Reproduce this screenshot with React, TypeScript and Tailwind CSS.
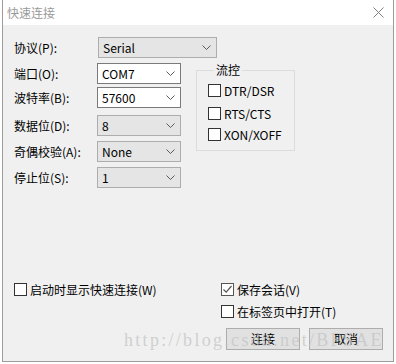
import React from "react";

const font = { fontFamily: '"Noto Sans CJK SC", "Noto Sans", sans-serif' };

function Chevron() {
  return (
    <svg width="9" height="5" viewBox="0 0 9 5" fill="none" aria-hidden>
      <path d="M0.5 0.5 L4.5 4.5 L8.5 0.5" stroke="#5a5a5a" strokeWidth="1" />
    </svg>
  );
}

function Select({ value, width, editable }: { value: string; width: string; editable?: boolean }) {
  return (
    <div
      className={`${width} h-[21px] flex items-center justify-between pl-[4px] pr-[5px] border ${
        editable ? "bg-white border-[#7a7a7a]" : "bg-[#e5e5e5] border-[#adadad]"
      }`}
    >
      <span className="text-[12px] leading-[14px] text-black">{value}</span>
      <Chevron />
    </div>
  );
}

function Check({ label, checked }: { label: string; checked?: boolean }) {
  return (
    <div className="flex items-center h-[13px]">
      <div
        className={`w-[13px] h-[13px] bg-white border flex items-center justify-center ${
          checked ? "border-[#555]" : "border-[#333]"
        }`}
      >
        {checked ? (
          <svg width="11" height="11" viewBox="0 0 11 11" fill="none" aria-hidden>
            <path d="M1.5 5.5 L4.2 8.2 L9.5 2" stroke="#555" strokeWidth="1.2" />
          </svg>
        ) : null}
      </div>
      <span className="ml-[3px] text-[12px] leading-[14px] text-black whitespace-nowrap">{label}</span>
    </div>
  );
}

function Row({ label, children, labelWidth = "w-[83px]", className = "" }: { label: string; children: React.ReactNode; labelWidth?: string; className?: string }) {
  return (
    <div className={`flex items-center ${className}`}>
      <span className={`${labelWidth} text-[12px] leading-[14px] text-black whitespace-nowrap`}>{label}</span>
      {children}
    </div>
  );
}

export default function App() {
  return (
    <div className="w-[396px] h-[364px] bg-white relative overflow-hidden" style={font}>
      <div className="ml-[2px] w-[392px] h-[362px] border-x border-b border-[#9c9c9c] flex flex-col">
        <div className="h-[25px] bg-white flex items-center justify-between pl-[4px] pr-[9px]">
          <span className="text-[12px] leading-[14px] text-[#9a9a9a]">快速连接</span>
          <svg width="11" height="11" viewBox="0 0 11 11" fill="none" aria-hidden>
            <path d="M0.5 0.5 L10.5 10.5 M10.5 0.5 L0.5 10.5" stroke="#808080" strokeWidth="1" />
          </svg>
        </div>

        <div className="flex-1 bg-[#f0f0f0] pl-[11px] pt-[12px]">
          <Row label="协议(P):" labelWidth="w-[84px]">
            <Select value="Serial" width="w-[119px]" />
          </Row>

          <div className="flex items-start">
            <div className="mt-[5px]">
              <Row label="端口(O):">
                <Select value="COM7" width="w-[84px]" editable />
              </Row>
              <Row label="波特率(B):" className="mt-[3px]">
                <Select value="57600" width="w-[84px]" editable />
              </Row>
              <Row label="数据位(D):" className="mt-[7px]">
                <Select value="8" width="w-[84px]" />
              </Row>
              <Row label="奇偶校验(A):" className="mt-[5px]">
                <Select value="None" width="w-[84px]" />
              </Row>
              <Row label="停止位(S):" className="mt-[5px]">
                <Select value="1" width="w-[84px]" />
              </Row>
            </div>

            <fieldset className="ml-[15px] mt-[5px] w-[99px] h-[88px] border border-[#dcdcdc] pl-[11px] pt-[7px]">
              <legend className="ml-[6px] px-[2px] text-[12px] leading-[14px] text-black">流控</legend>
              <Check label="DTR/DSR" />
              <div className="mt-[10px]">
                <Check label="RTS/CTS" />
              </div>
              <div className="mt-[8px]">
                <Check label="XON/XOFF" />
              </div>
            </fieldset>
          </div>

          <div className="mt-[95px] flex items-center">
            <div className="w-[207px]">
              <Check label="启动时显示快速连接(W)" />
            </div>
            <Check label="保存会话(V)" checked />
          </div>
          <div className="mt-[9px] ml-[207px]">
            <Check label="在标签页中打开(T)" />
          </div>
          <div className="mt-[10px] ml-[212px] flex gap-[9px]">
            <button className="w-[74px] h-[22px] bg-[#e1e1e1] border border-[#adadad] text-[12px] leading-[14px] text-black">
              连接
            </button>
            <button className="w-[74px] h-[22px] bg-[#e1e1e1] border border-[#adadad] text-[12px] leading-[14px] text-black">
              取消
            </button>
          </div>
        </div>
      </div>

      {/* csdn watermark laid over the dialog */}
      <div
        className="absolute left-[124px] top-[331px] text-[18px] leading-none tracking-[2.3px] text-[#c4c4c4]/75 whitespace-nowrap pointer-events-none"
        style={{ fontFamily: '"Liberation Serif", serif' }}
      >
        http://blog.csdn.net/BFSAE
      </div>
    </div>
  );
}
